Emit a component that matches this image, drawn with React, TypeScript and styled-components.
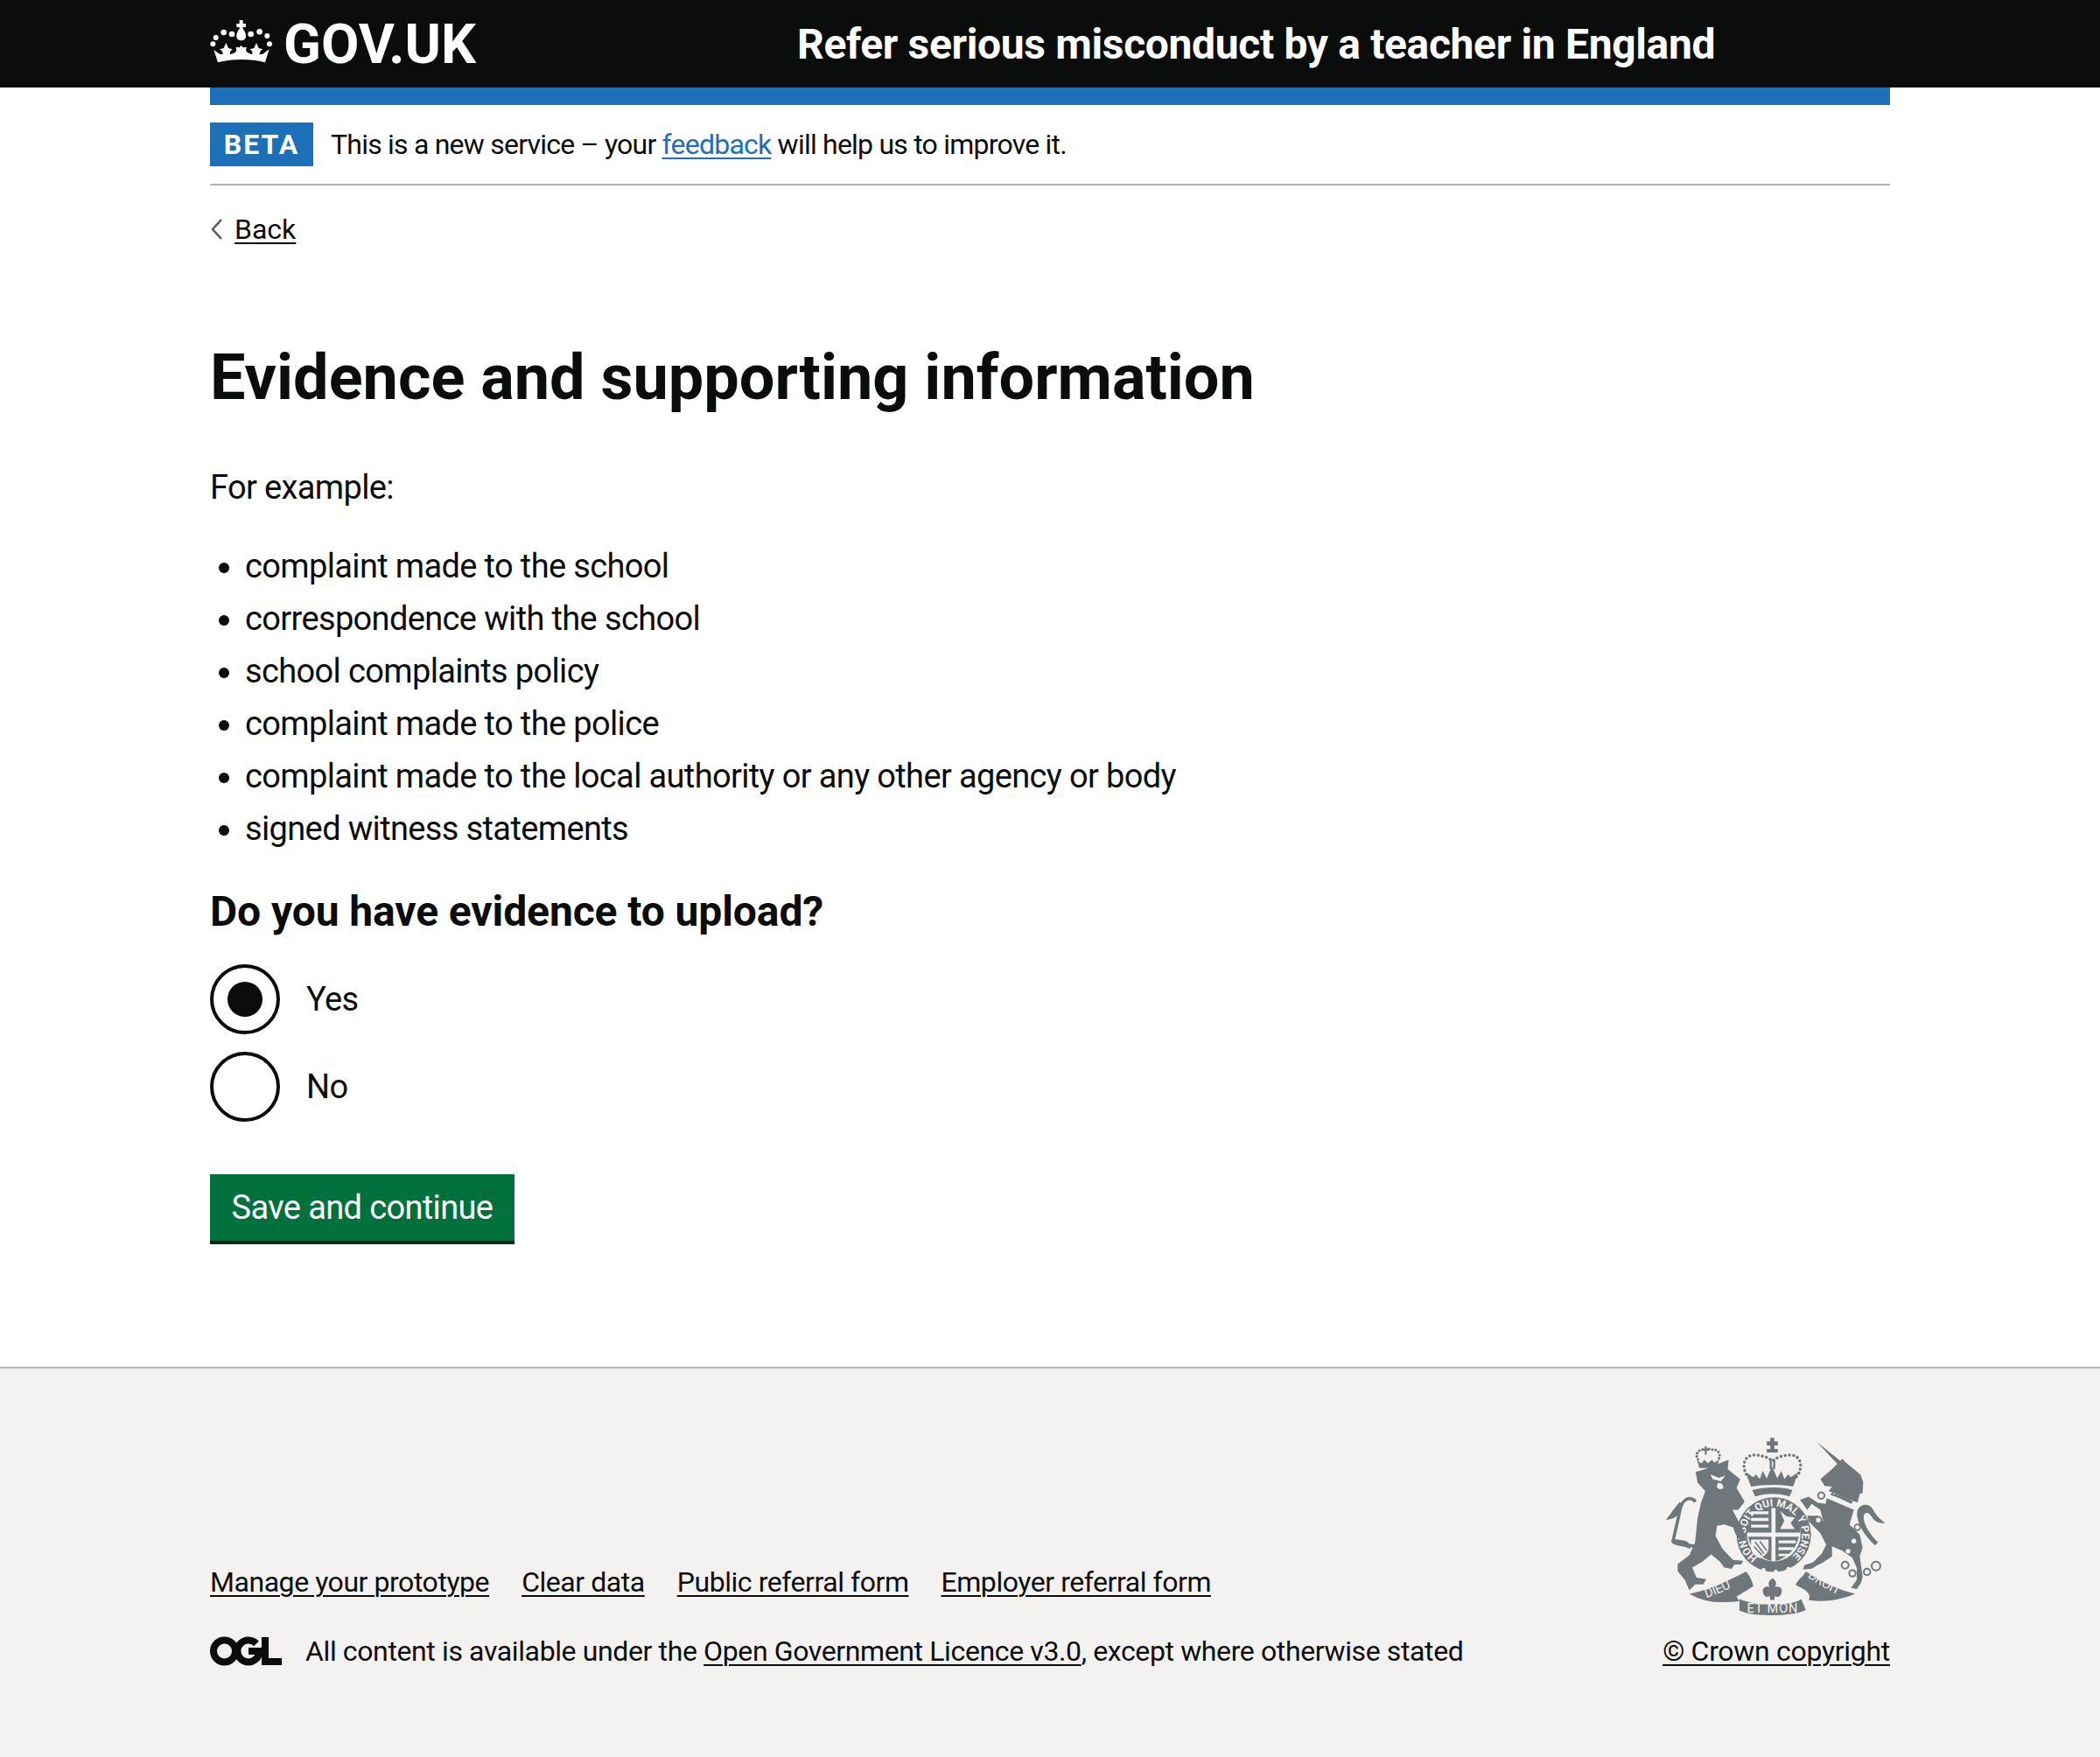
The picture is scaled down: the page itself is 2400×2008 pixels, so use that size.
import React from "react";
import styled, { createGlobalStyle } from "styled-components";

const GlobalStyle = createGlobalStyle`
  html, body {
    margin: 0;
    padding: 0;
    background: #fff;
  }
  body {
    font-family: Roboto, "Liberation Sans", Arial, sans-serif;
    color: #0b0c0c;
  }
`;

const Page = styled.div`
  display: flex;
  flex-direction: column;
  min-height: 2008px;
`;

const Header = styled.header`
  background: #0b0c0c;
  height: 100px;
`;

const Container = styled.div`
  width: 1920px;
  margin: 0 auto;
`;

const HeaderInner = styled(Container)`
  display: flex;
  align-items: center;
  height: 100px;
`;

const Logo = styled.a`
  display: flex;
  align-items: center;
  gap: 13px;
  width: 671px;
  color: #fff;
  font-size: 63px;
  font-weight: 700;
  text-decoration: none;
  svg {
    margin-bottom: 7px;
  }
`;

const ServiceName = styled.a`
  color: #fff;
  font-size: 48px;
  font-weight: 700;
  letter-spacing: -0.35px;
  text-decoration: none;
`;

const BlueBar = styled(Container)`
  height: 20px;
  background: #1d70b8;
`;

const PhaseBanner = styled(Container)`
  display: flex;
  align-items: center;
  gap: 20px;
  height: 90px;
  border-bottom: 2px solid #b1b4b6;
`;

const PhaseTag = styled.strong`
  display: flex;
  align-items: center;
  justify-content: center;
  width: 118px;
  height: 50px;
  background: #1d70b8;
  color: #fff;
  font-size: 32px;
  font-weight: 700;
  letter-spacing: 2px;
`;

const PhaseText = styled.span`
  font-size: 32px;
  letter-spacing: -0.78px;
`;

const BlueLink = styled.a`
  color: #1d70b8;
  text-decoration: underline;
  text-decoration-thickness: 2px;
  text-underline-offset: 4px;
`;

const DarkLink = styled.a`
  color: #0b0c0c;
  text-decoration: underline;
  text-decoration-thickness: 2px;
  text-underline-offset: 4px;
`;

const BackRow = styled.div`
  display: flex;
  align-items: center;
  gap: 12px;
  margin-top: 30px;
  height: 40px;
  font-size: 32px;
`;

const Main = styled(Container)`
  padding-top: 110px;
  flex: 1;
`;

const Title = styled.h1`
  margin: 0 0 60px;
  font-size: 72px;
  line-height: 80px;
  font-weight: 700;
`;

const Body = styled.p`
  margin: 0 0 40px;
  font-size: 38px;
  line-height: 50px;
  letter-spacing: -0.64px;
`;

const BulletList = styled.ul`
  margin: 0 0 40px;
  padding: 0 0 0 40px;
  font-size: 38px;
  line-height: 50px;
  letter-spacing: -0.64px;
`;

const BulletItem = styled.li`
  margin-bottom: 10px;
`;

const Question = styled.h2`
  margin: 0 0 30px;
  font-size: 48px;
  line-height: 60px;
  font-weight: 700;
  letter-spacing: -0.1px;
`;

const RadioRow = styled.label`
  display: flex;
  align-items: center;
  gap: 30px;
  height: 80px;
  margin-bottom: 20px;
  font-size: 38px;
  letter-spacing: -0.6px;
`;

const RadioMark = styled.span<{ $checked?: boolean }>`
  box-sizing: border-box;
  display: flex;
  align-items: center;
  justify-content: center;
  width: 80px;
  height: 80px;
  border: 4px solid #0b0c0c;
  border-radius: 50%;
  &::after {
    content: "";
    display: ${(p) => (p.$checked ? "block" : "none")};
    width: 40px;
    height: 40px;
    border-radius: 50%;
    background: #0b0c0c;
  }
`;

const Button = styled.button`
  display: block;
  margin-top: 60px;
  padding: 0;
  width: 348px;
  height: 80px;
  border: 0;
  border-bottom: 4px solid #002d18;
  background: #00703c;
  color: #fff;
  font-family: inherit;
  font-size: 38px;
  letter-spacing: -0.63px;
`;

const Footer = styled.footer`
  box-sizing: border-box;
  background: #f3f2f1;
  border-top: 2px solid #b1b4b6;
  height: 446px;
`;

const FooterInner = styled(Container)`
  display: flex;
  justify-content: space-between;
  align-items: flex-end;
  padding-top: 78px;
`;

const FooterMeta = styled.div`
  display: flex;
  flex-direction: column;
  gap: 41px;
`;

const FooterLinks = styled.div`
  display: flex;
  gap: 37px;
  font-size: 32px;
  letter-spacing: -0.45px;
`;

const LicenceRow = styled.div`
  display: flex;
  align-items: center;
  gap: 25px;
  font-size: 32px;
  letter-spacing: -0.38px;
`;

const CrestColumn = styled.div`
  display: flex;
  flex-direction: column;
  align-items: flex-end;
  font-size: 32px;
  letter-spacing: -0.3px;
`;

const CrestWrap = styled.div`
  margin: 0 3px 19px 0;
  width: 253px;
  height: 207px;
`;

function Crown() {
  return (
    <svg width="71" height="50" viewBox="15 15 213 150" fill="#fff">
      <path d="M116 18h12v12h10v12h-10v6c8 10 10 18 10 24 0 10-7 16-16 16s-16-6-16-16c0-6 2-14 10-24v-6h-10V30h10z" />
      <circle cx="35" cy="78" r="9" />
      <circle cx="62" cy="60" r="10" />
      <circle cx="90" cy="66" r="10" />
      <circle cx="155" cy="66" r="10" />
      <circle cx="185" cy="58" r="10" />
      <circle cx="211" cy="72" r="9" />
      <circle cx="25" cy="100" r="9" />
      <circle cx="219" cy="100" r="9" />
      <path d="M42 163 28 120l20 14 12 2-4-12-8-6 14-4 8-18 8 18 14 4-8 8v10l16-6 6-8-2-12 12 2 6-8 6 8 12-2-2 12 6 8 16 6v-10l-8-8 14-4 8-18 8 18 14 4-8 6-4 12 12-2 22-16-14 45c-54-13-109-13-162 0z" />
    </svg>
  );
}

function Chevron() {
  return (
    <svg width="16" height="26" viewBox="0 0 16 26" fill="none" stroke="#505a5f" strokeWidth="2.500">
      <path d="M13 2 3 13l10 11" />
    </svg>
  );
}

function OglLogo() {
  return (
    <svg width="84" height="34" viewBox="0 0 84 34" fill="none" stroke="#0b0c0c" strokeWidth="8">
      <circle cx="16.500" cy="17" r="12.500" />
      <path d="M53 8.500a12.500 12.500 0 1 0 0 17c2.500-2 3-5 3-8.500H44" />
      <path d="M63 1v28h19" />
    </svg>
  );
}

// hand traced from the reference, viewBox matches a 3x crop of the crest
function Crest() {
  const ink = "#6f777b";
  const bg = "#f3f2f1";
  return (
    <svg width="253" height="207" viewBox="70 40 760 620" fill={ink}>
      {/* royal crown */}
      <path d="M428 43h14v12h12v14h-12v12h12v12h-38V81h12V69h-12V55h12z" />
      <rect x="426" y="118" width="7" height="32" />
      <rect x="438" y="118" width="7" height="32" />
      <path
        d="M355 180c-28-30-22-78 18-78 28 0 50 10 62 20 12-10 34-20 62-20 40 0 46 48 18 78"
        fill="none"
        stroke={ink}
        strokeWidth="10"
        strokeDasharray="0.5 14"
        strokeLinecap="round"
      />
      <path d="M362 210c-6-15-12-30-16-48l24 16 8-10 14 16 10-28 14 26 18-42 18 42 14-26 10 28 14-16 8 10 24-16c-4 18-10 33-16 48-40-8-104-8-144 0z" />
      <path d="M366 222c40-12 100-12 138 0l-10 22c-40-12-80-12-118 0z" />

      {/* garter ring and shield */}
      <circle cx="440" cy="375" r="128" />
      <circle cx="440" cy="375" r="92" fill={bg} />
      <path d="M352 282h80v86h-84c0-34 0-60 4-86zM446 282h80c4 26 4 52 4 86h-84zM352 382h80v84c-40-10-72-44-80-84zM446 382h80c-8 40-40 74-80 84z" />
      <g fill={bg}>
        <path d="M362 295h60v10h-60zM362 318h60v10h-60zM362 341h60v10h-60zM456 395h60v10h-60zM456 418h52v10h-52zM456 441h36v8h-36z" />
        <path d="M462 294l20 18 30 4-14 20 14 20h-50l14-28z" />
        <path d="M362 392h60v30c0 14-12 26-30 34-18-8-30-20-30-34z" />
      </g>
      <path d="M376 400l30 40M372 416l28 30M392 398l24 32" stroke={ink} strokeWidth="5" fill="none" />
      <path id="garterPath" d="M384 454A97 97 0 1 1 496 454" fill="none" />
      <text fontFamily="Roboto, sans-serif" fontWeight="700" fontSize="36" fill={bg}>
        <textPath href="#garterPath" textLength="480" lengthAdjust="spacing">
          HONI SOIT QUI MAL Y PENSE
        </textPath>
      </text>
      <circle cx="405" cy="497" r="7" fill={bg} />
      <circle cx="447" cy="503" r="7" fill={bg} />
      <circle cx="490" cy="493" r="7" fill={bg} />

      {/* lion */}
      <path d="M172 160l28-8 85-34-3 32 18 15 25 20-13 30 28 47-22 28h-20l37 70 10 35h-20l-17-23-8-22-30-10-25 5-5 35 25 45 35 37 35 3-7 13h-23l-10 15-25-5-15-20-30-25-30 25-35 20 15 35 33 5-10 18h-28l-20 20-15-35-25-30v-25l40-30 20-45 8-80 12-55 15-40-27-30z" />
      <path d="M222 168l30 12 22-8-16 20-28-8zM248 198c14-2 20 8 18 18-8 6-18 2-22-6z" fill={bg} />
      <path d="M172 262c-22-22-47-7-54 28-8 40-18 80-23 105 25 10 55 20 77 20" fill="none" stroke={ink} strokeWidth="11" />
      <path d="M118 262c-14 14-30 40-48 62 16 0 36-6 48-24 4-16 6-28 0-38z" />
      <path d="M92 392c-6 4-4 10 2 14 14 8 40 8 60 18 0-14-6-24-20-28-14-2-30-6-42-4z" />
      {/* crown on lion */}
      <path
        d="M180 118c-14-24 6-38 24-34 8-4 14-4 22 0 18-4 36 10 24 34"
        fill="none"
        stroke={ink}
        strokeWidth="9"
        strokeDasharray="0.5 11"
        strokeLinecap="round"
      />
      <path d="M203 72h7v8h8v7h-8v14h-7V87h-8v-7h8z" />
      <path d="M178 122l14 8 10-12 12 12 14-12 8 10 16-10-6 24c-20 4-44 6-62 4z" />

      {/* unicorn */}
      <path d="M588 57l80 65 7-7 15 15 25 20 23 20 9 25-2 37-10 3-7 30-100-40 12-15-25-2-15-23 40-35 18-18z" />
      <path d="M622 250l93 40-15 50 35 35 10 45-10 30 10 70-5 20-15 22-20-4 20-28v-40l-15-35-35-25-35-15v35l-30 20-20 10-20 12-30 3 5-15 30-10 30-30 15-30-20-40-40-40-5-20h35l20 20-10-40-30-20-15 20-25-35 30-10 30 20 28 5z" />
      <path d="M634 238l8-10 6 10 8-8 6 12 8-8 6 12 8-8 6 14 8-6 8 14 8-2-8 12c-24-12-50-26-74-32z" />
      <circle cx="603" cy="241" r="11" fill={bg} stroke={ink} strokeWidth="6" />
      <circle cx="593" cy="325" r="11" fill={bg} stroke={ink} strokeWidth="6" />
      <circle cx="727" cy="350" r="10" fill={bg} stroke={ink} strokeWidth="5" />
      <circle cx="715" cy="397" r="8" fill={bg} />
      <circle cx="695" cy="432" r="8" fill={bg} />
      <g fill={bg} stroke={ink} strokeWidth="6">
        <circle cx="685" cy="480" r="12" />
        <circle cx="710" cy="508" r="11" />
        <circle cx="760" cy="503" r="11" />
        <circle cx="791" cy="483" r="15" />
      </g>
      <path d="M728 290c10-22 40-24 52-2 8 16 24 36 42 46-16 6-36-4-46-20-6-10-14-16-22-12-8 6-6 22 0 38 6 16 22 40 44 62l-10 10c-26-24-46-50-56-78-6-16-8-32-4-44z" />

      {/* motto ribbon */}
      <path d="M150 578c60-10 125-40 195-76 12 14 20 30 25 50-14 10-40 24-58 36 4 6 8 12 10 16-70 6-115 6-172-26z" />
      <path d="M322 596c30 12 66 18 84 18h40c28 0 64-2 88-18l16 38c-30 14-76 18-116 18s-84-4-112-16z" />
      <path d="M515 548c5-15 25-28 35-46 60 40 120 65 170 76-50 20-100 30-160 22 10-20-5-34-45-52z" />
      <path d="M436 525c14 10 14 20 8 30 20-6 30 10 20 26-6 10-14 10-20 4l-2 14h-14l-2-14c-6 6-14 6-20-4-10-16 0-32 20-26-6-10-6-20 10-30z" />
      <path id="dieuPath" d="M208 592c40-12 90-35 135-60" fill="none" />
      <path id="droitPath" d="M555 520c40 30 80 50 120 68" fill="none" />
      <g fontFamily="Roboto, sans-serif" fontSize="44" fill={bg}>
        <text>
          <textPath href="#dieuPath">DIEU</textPath>
        </text>
        <text>
          <textPath href="#droitPath">DROIT</textPath>
        </text>
        <text x="348" y="644" textLength="174">
          ET MON
        </text>
      </g>
    </svg>
  );
}

export default function App() {
  return (
    <Page>
      <GlobalStyle />
      <Header>
        <HeaderInner>
          <Logo>
            <Crown />
            GOV.UK
          </Logo>
          <ServiceName>Refer serious misconduct by a teacher in England</ServiceName>
        </HeaderInner>
      </Header>
      <BlueBar />
      <PhaseBanner>
        <PhaseTag>BETA</PhaseTag>
        <PhaseText>
          This is a new service – your <BlueLink>feedback</BlueLink> will help us to improve it.
        </PhaseText>
      </PhaseBanner>
      <Container>
        <BackRow>
          <Chevron />
          <DarkLink>Back</DarkLink>
        </BackRow>
      </Container>
      <Main>
        <Title>Evidence and supporting information</Title>
        <Body>For example:</Body>
        <BulletList>
          <BulletItem>complaint made to the school</BulletItem>
          <BulletItem>correspondence with the school</BulletItem>
          <BulletItem>school complaints policy</BulletItem>
          <BulletItem>complaint made to the police</BulletItem>
          <BulletItem>complaint made to the local authority or any other agency or body</BulletItem>
          <BulletItem>signed witness statements</BulletItem>
        </BulletList>
        <Question>Do you have evidence to upload?</Question>
        <RadioRow>
          <RadioMark $checked />
          Yes
        </RadioRow>
        <RadioRow>
          <RadioMark />
          No
        </RadioRow>
        <Button>Save and continue</Button>
      </Main>
      <Footer>
        <FooterInner>
          <FooterMeta>
            <FooterLinks>
              <DarkLink>Manage your prototype</DarkLink>
              <DarkLink>Clear data</DarkLink>
              <DarkLink>Public referral form</DarkLink>
              <DarkLink>Employer referral form</DarkLink>
            </FooterLinks>
            <LicenceRow>
              <OglLogo />
              <span>
                All content is available under the <DarkLink>Open Government Licence v3.0</DarkLink>, except where otherwise stated
              </span>
            </LicenceRow>
          </FooterMeta>
          <CrestColumn>
            <CrestWrap>
              <Crest />
            </CrestWrap>
            <DarkLink>© Crown copyright</DarkLink>
          </CrestColumn>
        </FooterInner>
      </Footer>
    </Page>
  );
}
